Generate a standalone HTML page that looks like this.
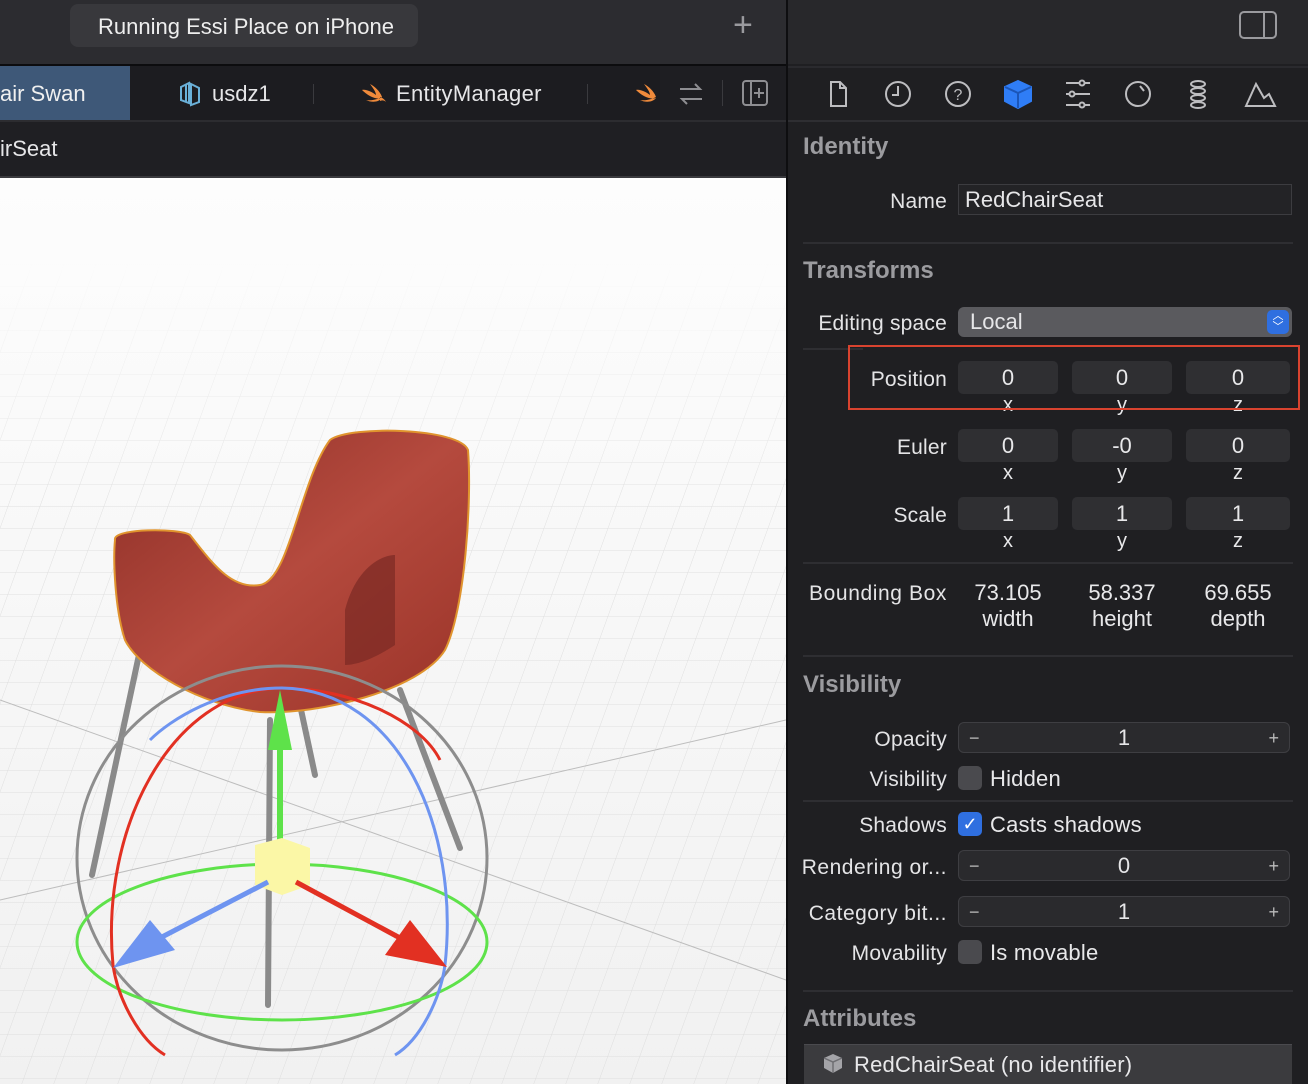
<!DOCTYPE html>
<html><head><meta charset="utf-8"><style>
*{margin:0;padding:0;box-sizing:border-box}
body{width:1308px;height:1084px;overflow:hidden;background:#1f1f22;font-family:"Liberation Sans",sans-serif;color:#e6e6e8;position:relative}
.a{position:absolute}
.lbl{position:absolute;right:361px;font-size:21px;color:#e4e4e6;text-align:right;white-space:nowrap;letter-spacing:.2px}
.hdr{position:absolute;left:803px;font-size:24px;font-weight:bold;color:#9b9b9f}
.sep{position:absolute;left:803px;width:490px;height:2px;background:#2e2e32}
.fld{position:absolute;background:#2f2f32;border-radius:5px;font-size:22px;text-align:center;color:#e8e8ea}
.sub{position:absolute;font-size:20px;text-align:center;width:100px;color:#e8e8ea}
.stp{position:absolute;left:958px;width:332px;height:31px;background:#2a2a2d;border:1px solid #3e3e42;border-radius:6px;font-size:22px;text-align:center;line-height:30px}
.stp i{position:absolute;font-style:normal;color:#bbb;font-size:18px;top:0}
.cb{position:absolute;left:958px;width:24px;height:24px;border-radius:5px;background:#4a4a4e}
.ct{position:absolute;left:990px;font-size:22px;color:#e8e8ea;letter-spacing:.2px}
</style></head><body>
<!-- top bar -->
<div class="a" style="left:0;top:0;width:786px;height:64px;background:#2c2c30"></div>
<div class="a" style="left:70px;top:4px;width:348px;height:43px;background:#38383c;border-radius:8px"></div>
<div class="a" style="left:98px;top:14px;font-size:22px;color:#eee">Running Essi Place on iPhone</div>
<div class="a" style="left:733px;top:6px;font-size:34px;color:#9a9a9e;font-weight:300">+</div>
<div class="a" style="left:0;top:64px;width:786px;height:2px;background:#0c0c0e"></div>
<div class="a" style="left:786px;top:0;width:2px;height:1084px;background:#0e0e10"></div>
<div class="a" style="left:788px;top:0;width:520px;height:64px;background:#28282b"></div>
<svg class="a" style="left:1238px;top:10px" width="40" height="30"><rect x="2" y="2" width="36" height="26" rx="4" fill="none" stroke="#9a9a9e" stroke-width="2"/><line x1="26" y1="2" x2="26" y2="28" stroke="#9a9a9e" stroke-width="2"/></svg>
<!-- tabs -->
<div class="a" style="left:0;top:66px;width:786px;height:54px;background:#1c1c20"></div>
<div class="a" style="left:0;top:66px;width:130px;height:54px;background:#3e5878"></div>
<div class="a" style="left:0;top:81px;font-size:22px;color:#f0f0f0">air Swan</div>
<svg class="a" style="left:177px;top:81px" width="26" height="26"><path d="M4 6l8-4v20l-8-3z M9 4v17 M14 3l8 4v14l-8 3z" fill="none" stroke="#6ab0d8" stroke-width="2"/></svg>
<div class="a" style="left:212px;top:81px;font-size:22px">usdz1</div>
<div class="a" style="left:313px;top:84px;width:1px;height:20px;background:#3a3a3e"></div>
<svg class="a" style="left:360px;top:82px" width="28" height="24"><path d="M2 8c6 6 14 10 20 8-3 4-10 5-16 2 6 1 12-1 16-3C20 9 14 4 10 2c3 4 6 8 6 11C12 10 6 7 2 8z M20 15c3 1 5 3 6 5-2-2-4-2-6-1z" fill="#ef8a3b"/></svg>
<div class="a" style="left:396px;top:81px;font-size:22px;letter-spacing:.3px">EntityManager</div>
<div class="a" style="left:587px;top:84px;width:1px;height:20px;background:#3a3a3e"></div>
<svg class="a" style="left:634px;top:82px" width="24" height="24"><path d="M2 8c6 6 14 10 20 8-3 4-10 5-16 2 6 1 12-1 16-3C20 9 14 4 10 2c3 4 6 8 6 11C12 10 6 7 2 8z" fill="#ef8a3b"/></svg>
<div class="a" style="left:660px;top:66px;width:126px;height:54px;background:#1e1e22"></div>
<svg class="a" style="left:676px;top:80px" width="30" height="28"><path d="M4 9h20l-5-5 M26 19H6l5 5" fill="none" stroke="#8e8e92" stroke-width="2"/></svg>
<div class="a" style="left:722px;top:80px;width:1px;height:26px;background:#3a3a3e"></div>
<svg class="a" style="left:740px;top:78px" width="30" height="30"><rect x="3" y="3" width="24" height="24" rx="3" fill="none" stroke="#8e8e92" stroke-width="2"/><line x1="11" y1="3" x2="11" y2="27" stroke="#8e8e92" stroke-width="2"/><path d="M19 10v10M14 15h10" stroke="#8e8e92" stroke-width="2"/></svg>
<div class="a" style="left:0;top:120px;width:786px;height:2px;background:#2c2c30"></div>
<div class="a" style="left:0;top:122px;width:786px;height:54px;background:#1f1f23"></div>
<div class="a" style="left:0;top:136px;font-size:22px">irSeat</div>
<div class="a" style="left:0;top:176px;width:786px;height:2px;background:#3a3a3e"></div>
<!-- viewport -->
<svg class="a" style="left:0;top:178px" width="786" height="906" viewBox="0 178 786 906">
<defs>
<linearGradient id="bg" x1="0" y1="0" x2="0" y2="1"><stop offset="0" stop-color="#fdfdfd"/><stop offset="1" stop-color="#f1f1f1"/></linearGradient>
<linearGradient id="fade" x1="0" y1="0" x2="0" y2="1"><stop offset="0" stop-color="#fff" stop-opacity="0"/><stop offset=".3" stop-color="#fff" stop-opacity="1"/></linearGradient>
<pattern id="g" width="32" height="22" patternUnits="userSpaceOnUse" patternTransform="skewX(-20)"><path d="M0 0H32M0 0V22" stroke="#d8d8d8" stroke-width="1" fill="none"/></pattern>
<mask id="m"><rect x="0" y="260" width="786" height="824" fill="url(#fade)"/></mask>
<linearGradient id="seat" x1="0" y1="0" x2="1" y2="1"><stop offset="0" stop-color="#8c2e26"/><stop offset=".5" stop-color="#b54a3e"/><stop offset="1" stop-color="#9a3328"/></linearGradient>
</defs>
<rect x="0" y="178" width="786" height="906" fill="url(#bg)"/>
<rect x="0" y="260" width="786" height="824" fill="url(#g)" mask="url(#m)" opacity=".8"/>
<path d="M0 700L786 980M0 900L786 720" stroke="#bdbdbd" stroke-width="1"/>
<!-- legs -->
<g stroke="#8a8a8a" stroke-width="6" stroke-linecap="round" fill="none">
<path d="M140 650L92 875"/><path d="M300 705L315 775"/><path d="M400 690L460 848"/><path d="M270 720L268 1005"/>
</g>
<path d="M115 540C112 528 180 528 190 535C210 560 230 590 260 585C290 580 300 480 330 440C350 425 460 428 468 450C472 500 465 610 445 650C420 690 320 715 260 712C200 705 140 670 125 640C115 610 113 560 115 540Z" fill="url(#seat)" stroke="#e0942e" stroke-width="2"/>
<path d="M345 610C355 570 380 555 395 555L395 645C380 655 360 665 345 665Z" fill="#7a2a24" opacity=".7"/>
<!-- gizmo -->
<ellipse cx="282" cy="858" rx="205" ry="192" fill="none" stroke="#8d8d8d" stroke-width="3"/>
<ellipse cx="282" cy="942" rx="205" ry="78" fill="none" stroke="#5ee24a" stroke-width="3"/>
<path d="M113 965C100 830 170 690 282 688C350 688 420 720 440 760" fill="none" stroke="#e23022" stroke-width="3"/>
<path d="M113 965C118 1000 140 1040 165 1055" fill="none" stroke="#e23022" stroke-width="3"/>
<path d="M445 965C460 830 400 690 282 688C220 688 170 720 150 740" fill="none" stroke="#6e94f0" stroke-width="3"/>
<path d="M445 965C440 1000 420 1040 395 1055" fill="none" stroke="#6e94f0" stroke-width="3"/>
<line x1="280" y1="860" x2="280" y2="740" stroke="#5ee24a" stroke-width="6"/>
<path d="M268 750L280 690L292 750Z" fill="#5ee24a"/>
<path d="M255 845L282 838L310 848L310 885L282 895L255 885Z" fill="#fbf7a6"/>
<line x1="268" y1="882" x2="160" y2="938" stroke="#6e94f0" stroke-width="5"/>
<path d="M113 968L150 920L175 950Z" fill="#6e94f0"/>
<line x1="296" y1="882" x2="400" y2="938" stroke="#e23022" stroke-width="5"/>
<path d="M447 967L385 955L410 920Z" fill="#e23022"/>
</svg>
<!-- right panel icons -->
<div class="a" style="left:788px;top:66px;width:520px;height:2px;background:#2a2a2e"></div>
<svg class="a" style="left:818px;top:74px" width="470" height="40" fill="none" stroke="#bdbdc0" stroke-width="2">
<path d="M13 8h9l6 6v18H13z M22 8v6h6"/>
<circle cx="80" cy="20" r="12"/><path d="M80 12v9h-6"/>
<circle cx="140" cy="20" r="12"/><text x="140" y="26" font-size="16" fill="#bdbdc0" stroke="none" text-anchor="middle" font-family="Liberation Sans">?</text>
<path d="M200 7l13 6v14l-13 7-13-7V13z" fill="#2f7df6" stroke="#2f7df6"/><path d="M187 13l13 6 13-6M200 19v15" stroke="#1b56b8"/>
<path d="M248 9h24M248 20h24M248 31h24"/><circle cx="264" cy="9" r="2.5" fill="#1f1f22"/><circle cx="254" cy="20" r="2.5" fill="#1f1f22"/><circle cx="264" cy="31" r="2.5" fill="#1f1f22"/>
<circle cx="320" cy="20" r="12"/><path d="M322 12l4 5"/>
<ellipse cx="380" cy="10" rx="7" ry="3"/><ellipse cx="380" cy="17" rx="7" ry="3"/><ellipse cx="380" cy="24" rx="7" ry="3"/><ellipse cx="380" cy="31" rx="7" ry="3"/>
<path d="M428 32l10-22 8 14 5-4 6 12z"/>
</svg>
<div class="a" style="left:788px;top:120px;width:520px;height:2px;background:#2e2e32"></div>
<div class="hdr" style="top:133px">Identity</div>
<div class="lbl" style="top:190px">Name</div>
<div class="a" style="left:958px;top:184px;width:334px;height:31px;background:#232326;border:1px solid #3c3c40;font-size:22px;padding:2px 6px">RedChairSeat</div>
<div class="sep" style="top:242px"></div>
<div class="hdr" style="top:257px">Transforms</div>
<div class="lbl" style="top:312px">Editing space</div>
<div class="a" style="left:958px;top:307px;width:334px;height:30px;background:#5a5a5e;border-radius:6px;font-size:22px;padding:2px 12px">Local</div>
<div class="a" style="left:1267px;top:310px;width:22px;height:24px;background:#2f6fe0;border-radius:5px;color:#fff;font-size:11px;text-align:center;line-height:11px;padding-top:1px">︿<br>﹀</div>
<div class="sep" style="top:348px;width:60px"></div>
<div class="lbl" style="top:368px">Position</div>
<div class="fld" style="left:958px;top:361px;width:100px;height:33px;line-height:34px">0</div>
<div class="fld" style="left:1072px;top:361px;width:100px;height:33px;line-height:34px">0</div>
<div class="fld" style="left:1186px;top:361px;width:104px;height:33px;line-height:34px">0</div>
<div class="sub" style="left:958px;top:394px">x</div><div class="sub" style="left:1072px;top:394px">y</div><div class="sub" style="left:1188px;top:394px">z</div>
<div class="a" style="left:848px;top:345px;width:452px;height:65px;border:2px solid #d9432f"></div>
<div class="lbl" style="top:436px">Euler</div>
<div class="fld" style="left:958px;top:429px;width:100px;height:33px;line-height:34px">0</div>
<div class="fld" style="left:1072px;top:429px;width:100px;height:33px;line-height:34px">-0</div>
<div class="fld" style="left:1186px;top:429px;width:104px;height:33px;line-height:34px">0</div>
<div class="sub" style="left:958px;top:462px">x</div><div class="sub" style="left:1072px;top:462px">y</div><div class="sub" style="left:1188px;top:462px">z</div>
<div class="lbl" style="top:504px">Scale</div>
<div class="fld" style="left:958px;top:497px;width:100px;height:33px;line-height:34px">1</div>
<div class="fld" style="left:1072px;top:497px;width:100px;height:33px;line-height:34px">1</div>
<div class="fld" style="left:1186px;top:497px;width:104px;height:33px;line-height:34px">1</div>
<div class="sub" style="left:958px;top:530px">x</div><div class="sub" style="left:1072px;top:530px">y</div><div class="sub" style="left:1188px;top:530px">z</div>
<div class="sep" style="top:562px"></div>
<div class="lbl" style="top:582px;letter-spacing:.6px">Bounding Box</div>
<div class="sub" style="left:958px;top:580px;font-size:22px;line-height:26px">73.105<br>width</div>
<div class="sub" style="left:1072px;top:580px;font-size:22px;line-height:26px">58.337<br>height</div>
<div class="sub" style="left:1188px;top:580px;font-size:22px;line-height:26px">69.655<br>depth</div>
<div class="sep" style="top:655px"></div>
<div class="hdr" style="top:671px">Visibility</div>
<div class="lbl" style="top:728px">Opacity</div>
<div class="stp" style="top:722px"><i style="left:10px">−</i>1<i style="right:10px">+</i></div>
<div class="lbl" style="top:768px">Visibility</div>
<div class="cb" style="top:766px"></div><div class="ct" style="top:766px">Hidden</div>
<div class="sep" style="top:800px"></div>
<div class="lbl" style="top:814px">Shadows</div>
<div class="cb" style="top:812px;background:#2f6fe0;color:#fff;font-size:18px;text-align:center;line-height:24px">✓</div><div class="ct" style="top:812px">Casts shadows</div>
<div class="lbl" style="top:856px;letter-spacing:.5px">Rendering or...</div>
<div class="stp" style="top:850px"><i style="left:10px">−</i>0<i style="right:10px">+</i></div>
<div class="lbl" style="top:902px;letter-spacing:.5px">Category bit...</div>
<div class="stp" style="top:896px"><i style="left:10px">−</i>1<i style="right:10px">+</i></div>
<div class="lbl" style="top:942px">Movability</div>
<div class="cb" style="top:940px"></div><div class="ct" style="top:940px">Is movable</div>
<div class="sep" style="top:990px"></div>
<div class="hdr" style="top:1005px">Attributes</div>
<div class="a" style="left:804px;top:1044px;width:488px;height:40px;background:#3b3b3e;border-top:1px solid #4a4a4e"></div>
<svg class="a" style="left:822px;top:1052px" width="22" height="22"><path d="M11 2l9 4v10l-9 5-9-5V6z" fill="#a4a4a8"/><path d="M2 6l9 4 9-4M11 10v11" stroke="#6e6e72" stroke-width="1.5" fill="none"/></svg>
<div class="a" style="left:854px;top:1052px;font-size:22px;color:#e8e8ea;letter-spacing:.2px">RedChairSeat (no identifier)</div>
</body></html>
